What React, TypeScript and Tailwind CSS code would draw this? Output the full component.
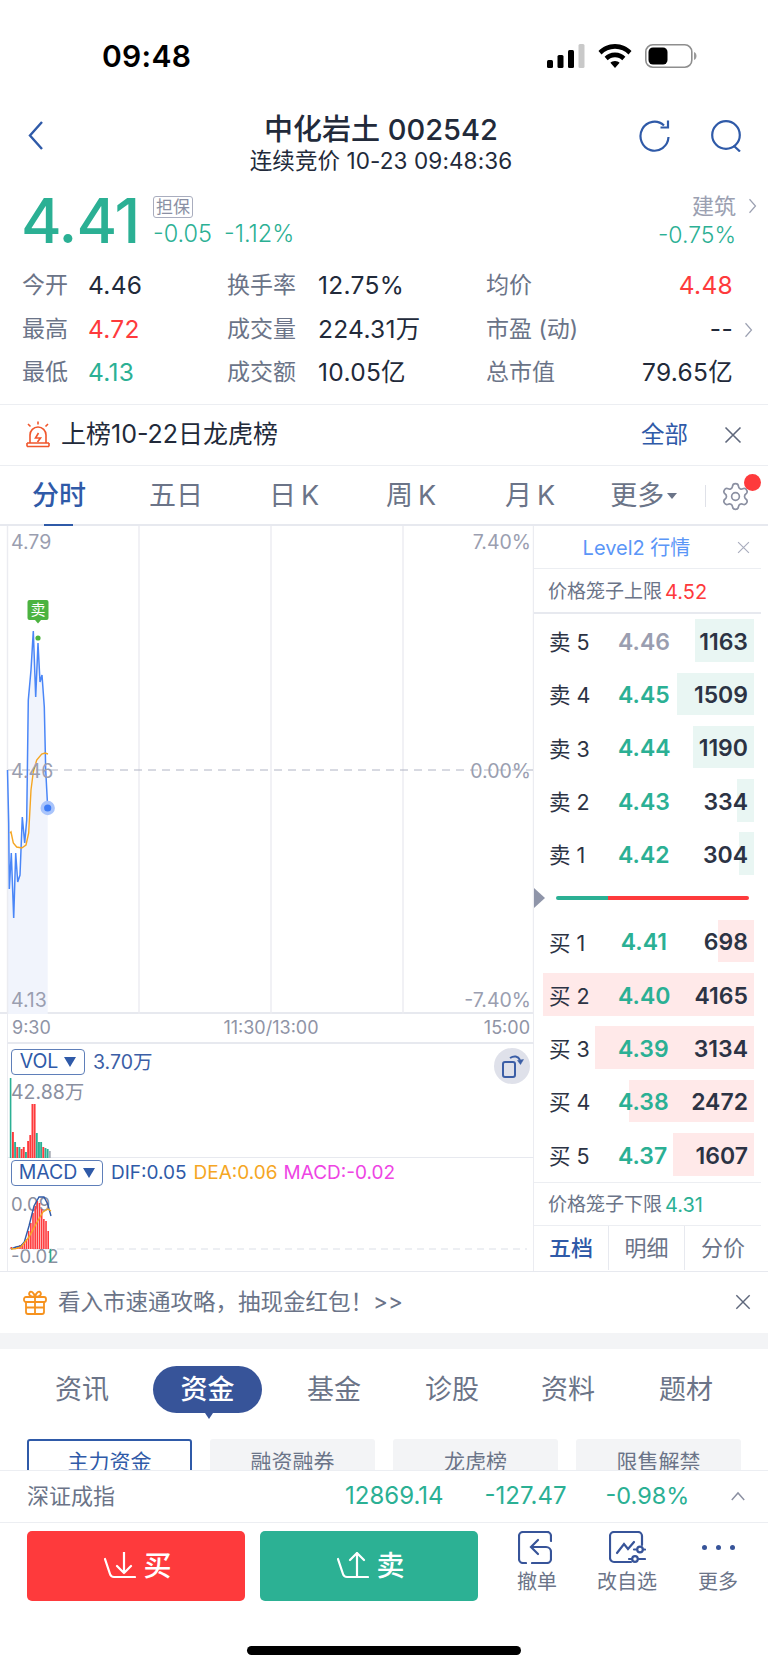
import React from "react";
import { Settings } from "lucide-react";

const GREEN = "text-[#2bb094]";
const RED = "text-[#fe3a3c]";

function Chevron({ dir = "right", className = "" }: { dir?: "left" | "right" | "up"; className?: string }) {
  const d = dir === "right" ? "M2 2 L10 11 L2 20" : dir === "left" ? "M10 2 L2 11 L10 20" : "M2 10 L9 2 L16 10";
  return (
    <svg viewBox={dir === "up" ? "0 0 18 12" : "0 0 12 22"} className={className} fill="none" stroke="currentColor" strokeWidth="1.6">
      <path d={d} />
    </svg>
  );
}

function Close({ className = "" }: { className?: string }) {
  return (
    <svg viewBox="0 0 18 18" className={className} fill="none" stroke="currentColor" strokeWidth="1.6">
      <path d="M1.5 1.5 L16.5 16.5 M16.5 1.5 L1.5 16.5" />
    </svg>
  );
}

function StatusBar() {
  return (
    <div className="h-[112px] flex items-center pl-[102px] pr-[71px] justify-between">
      <span className="text-[30px] font-semibold text-black leading-none tracking-[0.3px] font-['Inter']">09:48</span>
      <div className="flex items-center gap-[13px] -ml-[3px]">
        <svg width="38" height="24" viewBox="0 0 38 24">
          <rect x="0" y="16" width="6" height="8" rx="1.5" fill="#000" />
          <rect x="10.5" y="11" width="6" height="13" rx="1.5" fill="#000" />
          <rect x="21" y="6" width="6" height="18" rx="1.5" fill="#000" />
          <rect x="31.5" y="0" width="6" height="24" rx="1.5" fill="#c9c9c9" />
        </svg>
        <svg width="34" height="24" viewBox="0 0 34 24">
          <path d="M17 0 C24 0 29.5 3 33.5 7 L30.5 10.5 C27 7 22.5 4.8 17 4.8 C11.5 4.8 7 7 3.5 10.5 L0.5 7 C4.5 3 10 0 17 0 Z" fill="#000" />
          <path d="M17 8.5 C21.5 8.5 24.8 10.2 27.4 12.8 L24.3 16.2 C22.4 14.3 20 13.2 17 13.2 C14 13.2 11.6 14.3 9.7 16.2 L6.6 12.8 C9.2 10.2 12.5 8.5 17 8.5 Z" fill="#000" />
          <path d="M17 17 C19 17 20.4 17.7 21.6 18.8 L17 24 L12.4 18.8 C13.6 17.7 15 17 17 17 Z" fill="#000" />
        </svg>
        <svg width="52" height="24" viewBox="0 0 52 24">
          <rect x="0.8" y="0.8" width="46" height="22.4" rx="7" fill="none" stroke="#8e8e8e" strokeWidth="1.6" />
          <rect x="3.5" y="3.5" width="19" height="17" rx="4.5" fill="#000" />
          <path d="M49 8 C51 9 51.5 10.5 51.5 12 C51.5 13.5 51 15 49 16 Z" fill="#9a9a9a" />
        </svg>
      </div>
    </div>
  );
}

function Header() {
  return (
    <div className="h-[62px] grid grid-cols-[1fr_auto_1fr] pl-[27px] pr-[27px]">
      <div className="flex items-start pt-[7px]">
        <Chevron dir="left" className="w-[18px] h-[33px] text-[#2f5aa8]" />
      </div>
      <div className="flex flex-col items-center mr-[6px]">
        <div className="text-[29px] leading-[36px] text-[#222a3a] font-medium whitespace-nowrap">中化岩土 002542</div>
        <div className="text-[22.5px] leading-[26px] text-[#222a3a] whitespace-nowrap tracking-[0.1px]">连续竞价 10-23 09:48:36</div>
      </div>
      <div className="flex justify-end items-start gap-[41px] pt-[8px] -mr-[1px]">
        <svg width="31" height="32" viewBox="0 0 31 32" fill="none" stroke="#2f5aa8" strokeWidth="2.2">
          <path d="M29.5 17 A14 14.5 0 1 1 25 5.5" />
          <path d="M29 0.5 V7.5 H21.5" />
        </svg>
        <svg width="31" height="32" viewBox="0 0 31 32" fill="none" stroke="#2f5aa8" strokeWidth="2.2">
          <circle cx="15" cy="15" r="13.8" />
          <path d="M22.5 25.5 L29 31.5" />
        </svg>
      </div>
    </div>
  );
}

function Quote() {
  return (
    <div className="h-[88px] pl-[21px] pr-[32px] flex pt-[15px]">
      <div className={`text-[62px] leading-[64px] font-medium ${GREEN} w-[132px] tracking-[-1px]`}>4.41</div>
      <div className="flex flex-col">
        <div className="mt-[7px] w-[40px] h-[22px] border border-[#a9adbe] rounded-[3px] text-[17px] leading-[20px] text-center text-[#8a8fa3]">担保</div>
        <div className={`mt-[2px] text-[23.5px] leading-[28px] ${GREEN} flex gap-[12px] font-light`}>
          <span>-0.05</span>
          <span>-1.12%</span>
        </div>
      </div>
      <div className="ml-auto flex flex-col items-end">
        <div className="mt-[2px] flex items-center text-[22px] leading-[30px] text-[#9ba0b1] relative">
          建筑
          <Chevron className="absolute left-[56px] top-[6px] w-[9px] h-[18px] text-[#9ba0b1]" />
        </div>
        <div className={`text-[23px] leading-[28px] ${GREEN} font-light`}>-0.75%</div>
      </div>
    </div>
  );
}

function Stats() {
  const label = "text-[#6b7488] whitespace-nowrap";
  const num = "text-[24.5px] tracking-[0.3px] whitespace-nowrap";
  const rows: { a: string; av: string; ac: string; b: string; bv: string; c: string; cv: string; cc: string; more?: boolean }[] = [
    { a: "今开", av: "4.46", ac: "text-[#222a3a]", b: "换手率", bv: "12.75%", c: "均价", cv: "4.48", cc: RED },
    { a: "最高", av: "4.72", ac: RED, b: "成交量", bv: "224.31万", c: "市盈 (动)", cv: "--", cc: "text-[#222a3a]", more: true },
    { a: "最低", av: "4.13", ac: GREEN, b: "成交额", bv: "10.05亿", c: "总市值", cv: "79.65亿", cc: "text-[#222a3a]" },
  ];
  return (
    <div className="pl-[22px] pt-[2px] pb-[9px] text-[23px] leading-[43.5px]">
      {rows.map((r) => (
        <div key={r.a} className="flex items-center">
          <div className="w-[296px] shrink-0 grid grid-cols-[66px_139px_91px] items-center">
            <span className={label}>{r.a}</span>
            <span className={`${r.ac} ${num}`}>{r.av}</span>
            <span className={label}>{r.b}</span>
          </div>
          <span className={`text-[#222a3a] ${num} w-[168px]`}>{r.bv}</span>
          <div className="w-[247px] flex justify-between relative">
            <span className={label}>{r.c}</span>
            <span className={`${r.cc} ${num}`}>{r.cv}</span>
            {r.more && <Chevron className="absolute -right-[20px] top-[13px] w-[9px] h-[18px] text-[#9ba0b1]" />}
          </div>
        </div>
      ))}
    </div>
  );
}

function Notice() {
  return (
    <div className="h-[62px] border-y border-[#eceef2] flex items-center pl-[25px] pr-[26px]">
      <svg width="26" height="27" viewBox="0 0 26 27" fill="none" stroke="#f0562c" strokeWidth="1.6">
        <path d="M5 22 V14 A8 8 0 0 1 21 14 V22" />
        <path d="M2 25.5 H24 M2 22 V25.5 M24 22 V25.5 M2 22 H24" />
        <path d="M13.5 12 L10.5 17 H15.5 L12.5 21" />
        <path d="M13 0.5 V3.5 M3 3 L5.5 5.5 M23 3 L20.5 5.5" />
      </svg>
      <span className="ml-[10px] text-[25px] text-[#222a3a]">上榜10-22日龙虎榜</span>
      <span className="ml-auto text-[23.5px] text-[#2f5aa8]">全部</span>
      <Close className="ml-[36px] w-[18px] h-[18px] text-[#5f687c]" />
    </div>
  );
}

function Tabs() {
  const base = "text-[27px] text-[#6b7488] whitespace-nowrap";
  return (
    <div className="h-[60px] flex items-center relative border-b-2 border-[#e7e9ef] pt-[3px]">
      <div className="absolute left-[44px] -bottom-[2px] w-[29px] h-[2px] bg-[#2f5aa8]" />
      <span className="ml-[32px] text-[27px] font-medium text-[#2f5aa8]">分时</span>
      <span className={`ml-[63px] ${base}`}>五日</span>
      <span className={`ml-[66px] ${base}`}>日{"\u2009"}K</span>
      <span className={`ml-[67px] ${base}`}>周{"\u2009"}K</span>
      <span className={`ml-[69px] ${base}`}>月{"\u2009"}K</span>
      <span className={`ml-[55px] ${base}`}>更多</span>
      <span className="ml-[3px] w-0 h-0 border-x-[5px] border-x-transparent border-t-[6px] border-t-[#6b7488]" />
      <span className="ml-[28px] w-px h-[22px] bg-[#dfe1e8]" />
      <span className="ml-[14px] relative">
        <Settings className="w-[31px] h-[31px] text-[#8b90a2]" strokeWidth={1.3} />
        <span className="absolute left-[24px] -top-[7px] w-[17px] h-[17px] rounded-full bg-[#fe3a3c]" />
      </span>
    </div>
  );
}

const pricePts =
  "7.5,770 8.7,823 9.3,889 11.3,853 13.7,918 15.7,853 17.7,882 20,875 22.3,817 24.7,843 26.7,820 28.3,700 31,670 33.3,631 35.7,697 38,643 40,682 42,675 44.3,707 45.7,770 47.7,808";
const maPts =
  "10,833 11,832 13.3,843 16.7,847 21.7,848 26,845 28.7,833 31,790 33.3,772 36.7,760 41.7,754 45,753 48,754";

function MainChart() {
  const tl = "absolute text-[19.5px] leading-[22px] text-[#9a9eb0]";
  return (
    <div className="h-[488px] relative border-b-2 border-[#e7e9ef]">
      <svg className="absolute left-0 top-0" width="534" height="488" viewBox="0 526 534 488">
        <polygon points={`7.5,1014 ${pricePts} 47.7,1014`} fill="#f1f4fc" />
        <path d="M7.5 526 V1014 M139 526 V1014 M271 526 V1014 M403 526 V1014 M533.5 526 V1014" stroke="#ebecf1" strokeWidth="1.4" fill="none" />
        <path d="M8 770 H533" stroke="#b0b4c4" strokeWidth="1" strokeDasharray="8 6" fill="none" />
        <polyline points={pricePts} fill="none" stroke="#4a86f7" strokeWidth="1.5" />
        <polyline points={maPts} fill="none" stroke="#f5a623" strokeWidth="1.4" />
        <circle cx="38" cy="638" r="2.6" fill="#4cb340" />
        <circle cx="47.7" cy="808" r="7.2" fill="#a9c4fb" />
        <circle cx="47.7" cy="808" r="3.6" fill="#3f7df6" />
        <rect x="27.5" y="600" width="21" height="20" rx="2" fill="#4cb340" />
        <path d="M35 620 H41 L38 623.5 Z" fill="#4cb340" />
      </svg>
      <span className="absolute left-[27.5px] top-[74px] w-[21px] h-[20px] text-white text-[15px] leading-[20px] text-center">卖</span>
      <span className={`${tl} left-[11px] top-[5px]`}>4.79</span>
      <span className={`${tl} right-[3px] top-[5px]`}>7.40%</span>
      <span className={`${tl} left-[11px] top-[234px]`}>4.46</span>
      <span className={`${tl} right-[3px] top-[234px]`}>0.00%</span>
      <span className={`${tl} left-[11px] top-[463px]`}>4.13</span>
      <span className={`${tl} right-[3px] top-[463px]`}>-7.40%</span>
    </div>
  );
}

function XAxis() {
  return (
    <div className="h-[30px] ml-[7px] border-x border-[#ebecf1] border-b-2 border-b-[#e7e9ef] grid grid-cols-3 items-center pl-[4px] pr-[3px] text-[18px] text-[#8f94a6]">
      <span>9:30</span>
      <span className="text-center whitespace-nowrap">11:30/13:00</span>
      <span className="text-right">15:00</span>
    </div>
  );
}

function IndicatorTag({ name, w }: { name: string; w: string }) {
  return (
    <span className={`${w} h-[26px] border border-[#5f7fb9] rounded-[4px] flex items-center justify-center gap-[6px] text-[19.5px] text-[#2f5aa8] leading-none`}>
      {name}
      <span className="w-0 h-0 border-x-[6px] border-x-transparent border-t-[10px] border-t-[#2f5aa8]" />
    </span>
  );
}

const bars: [number, string][] = [
  [1078, "#2bb094"], [1132, "#fe3a3c"], [1142, "#2bb094"], [1147, "#fe3a3c"], [1147, "#2bb094"],
  [1149, "#fe3a3c"], [1147, "#fe3a3c"], [1152, "#2bb094"], [1141, "#fe3a3c"], [1135, "#fe3a3c"],
  [1104, "#fe3a3c"], [1104, "#fe3a3c"], [1133, "#2bb094"], [1142, "#2bb094"], [1142, "#2bb094"],
  [1147, "#fe3a3c"], [1148, "#2bb094"], [1149, "#2bb094"], [1151, "#a9adb8"],
];

function VolPanel() {
  return (
    <div className="h-[114px] ml-[7px] border-x border-[#ebecf1] border-b border-b-[#e7e9ef] relative pl-[3px] pt-[4px]">
      <div className="flex items-center gap-[8px]">
        <IndicatorTag name="VOL" w="w-[74px]" />
        <span className="text-[19.5px] text-[#3b5ea6]">3.70万</span>
      </div>
      <div className="text-[19.5px] leading-[24px] text-[#8a8f9f] mt-[3px]">42.88万</div>
      <svg className="absolute left-0 top-0" width="60" height="114" viewBox="7 1044 60 114">
        {bars.map(([top, c], i) => (
          <rect key={i} x={8.8 + i * 2.17} y={top} width={i === 0 ? 1.6 : 1.9} height={1158 - top} fill={c} />
        ))}
      </svg>
      <div className="absolute right-[3px] top-[4px] w-[36px] h-[36px] rounded-full bg-[#dfe1ea] flex items-center justify-center">
        <svg width="24" height="24" viewBox="0 0 24 24" fill="none" stroke="#3b5ea6" strokeWidth="2">
          <rect x="3" y="8" width="12" height="15" rx="2" />
          <path d="M10 4 C14 1.5 18 2 20 6" />
          <path d="M17.5 6.5 L23.5 5.5 L20.5 10.5 Z" fill="#3b5ea6" strokeWidth="0.5" />
        </svg>
      </div>
    </div>
  );
}

const macdTops = [1248, 1249, 1248, 1248, 1246, 1245, 1243, 1240, 1232, 1224, 1214, 1207, 1202, 1204, 1210, 1220, 1222, 1232];

function MacdPanel() {
  return (
    <div className="h-[113px] ml-[7px] border-x border-[#ebecf1] relative pl-[3px] pt-[2px]">
      <div className="flex items-center text-[19px] leading-none">
        <IndicatorTag name="MACD" w="w-[92px]" />
        <span className="ml-[8px] text-[#2f5aa8]">DIF:0.05</span>
        <span className="ml-[7px] text-[#f5a623]">DEA:0.06</span>
        <span className="ml-[6px] text-[#ee44e4]">MACD:-0.02</span>
      </div>
      <span className="absolute left-[3px] top-[34px] text-[18.5px] leading-[24px] text-[#8a8f9f]">0.09</span>
      <span className="absolute left-[3px] top-[86px] text-[18.5px] leading-[24px] text-[#8a8f9f]">-0.02</span>
      <svg className="absolute left-0 top-0" width="526" height="113" viewBox="7 1159 526 113">
        <path d="M8 1250 H526" stroke="#dcdfe8" strokeWidth="1.2" strokeDasharray="7 5" fill="none" />
        {macdTops.map((t, i) => (
          <rect key={i} x={9.5 + i * 2.17} y={t} width="1.6" height={1250 - t} fill="#fe3a3c" />
        ))}
        <rect x="48.7" y="1250" width="1.6" height="13" fill="#2bb094" />
        <polyline points="10,1250 15,1248 20,1247 23.3,1243 28,1227 33,1207 38,1198 43,1198 46.7,1205 50,1217" fill="none" stroke="#2f5aa8" strokeWidth="1.4" />
        <polyline points="10,1250 15,1249.5 20,1248 28,1238 35,1225 42,1213 47,1210 50,1212" fill="none" stroke="#f5a623" strokeWidth="1.4" />
      </svg>
    </div>
  );
}

function BookRow({ label, price, qty, bar, barColor, priceColor }: { label: string; price: string; qty: number; bar: number; barColor: string; priceColor: string }) {
  return (
    <div className="h-[42.6px] ml-[9px] w-[211px] relative flex items-center pl-[6px] pr-[6px] pt-[3px]">
      <div className={`absolute right-0 inset-y-0 ${barColor}`} style={{ width: bar }} />
      <span className="relative text-[21.5px] text-[#2c3344] w-[69px] whitespace-nowrap">{label}</span>
      <span className={`relative w-[49px] text-right text-[23px] font-semibold whitespace-nowrap ${priceColor}`}>{price}</span>
      <span className="relative ml-auto text-[23px] font-semibold text-[#2c3344]">{qty}</span>
    </div>
  );
}

function OrderBook() {
  const sells: [string, string, number, number, string][] = [
    ["卖 5", "4.46", 1163, 59, "text-[#9a9eb0]"],
    ["卖 4", "4.45", 1509, 77, GREEN],
    ["卖 3", "4.44", 1190, 61, GREEN],
    ["卖 2", "4.43", 334, 17, GREEN],
    ["卖 1", "4.42", 304, 15, GREEN],
  ];
  const buys: [string, string, number, number][] = [
    ["买 1", "4.41", 698, 36],
    ["买 2", "4.40", 4165, 211],
    ["买 3", "4.39", 3134, 159],
    ["买 4", "4.38", 2472, 125],
    ["买 5", "4.37", 1607, 81],
  ];
  return (
    <div className="w-[227px] flex flex-col">
      <div className="h-[44px] border-b border-[#eceef2] flex items-center relative justify-center pr-[22px] pt-[3px]">
        <span className="text-[20px] text-[#5b96f7]">Level2 行情</span>
        <Close className="absolute right-[11px] top-[15px] w-[13px] h-[13px] text-[#a9adbe]" />
      </div>
      <div className="h-[45px] border-b-2 border-[#e7e9ef] flex items-center pl-[14px] text-[19px] text-[#6b7488] whitespace-nowrap pt-[2px]">
        价格笼子上限<span className={`ml-[3px] ${RED} text-[20px]`}>4.52</span>
      </div>
      <div className="flex flex-col gap-[10.7px] pt-[5px]">
        {sells.map(([l, p, q, b, c]) => (
          <BookRow key={l} label={l} price={p} qty={q} bar={b} barColor="bg-[#e9f6f3]" priceColor={c} />
        ))}
      </div>
      <div className="h-[45px] relative flex items-center pl-[22px]">
        <span className="absolute left-0 top-[13px] w-0 h-0 border-y-[10px] border-y-transparent border-l-[11px] border-l-[#8f95a9]" />
        <div className="w-[193px] h-[4px] mt-[1px] rounded-full overflow-hidden flex">
          <div className="w-[52px] bg-[#2bb094]" />
          <div className="flex-1 bg-[#fe3a3c]" />
        </div>
      </div>
      <div className="flex flex-col gap-[10.7px]">
        {buys.map(([l, p, q, b]) => (
          <BookRow key={l} label={l} price={p} qty={q} bar={b} barColor="bg-[#ffe9e9]" priceColor={GREEN} />
        ))}
      </div>
      <div className="mt-[6px] h-[45px] border-y border-[#eceef2] flex items-center pl-[14px] text-[19px] text-[#6b7488] whitespace-nowrap pt-[2px]">
        价格笼子下限<span className={`ml-[3px] ${GREEN} text-[20px]`}>4.31</span>
      </div>
      <div className="h-[44px] grid grid-cols-[75px_76px_76px] text-[22px] text-[#6b7488] text-center leading-[44px]">
        <span className="border-r border-[#e7e9ef] text-[#2f5aa8] font-medium">五档</span>
        <span className="border-r border-[#e7e9ef]">明细</span>
        <span>分价</span>
      </div>
    </div>
  );
}

function ChartArea() {
  return (
    <div className="h-[746px] flex border-b border-[#e7e9ef]">
      <div className="w-[534px] flex flex-col">
        <MainChart />
        <XAxis />
        <VolPanel />
        <MacdPanel />
      </div>
      <OrderBook />
    </div>
  );
}

function Banner() {
  return (
    <div className="h-[61px] flex items-center pl-[23px] pr-[17px]">
      <svg width="24" height="25" viewBox="0 0 24 25" fill="none" stroke="#f6921e" strokeWidth="1.8">
        <rect x="1" y="7" width="22" height="5" rx="2" />
        <path d="M3 12 V22 A2 2 0 0 0 5 24 H19 A2 2 0 0 0 21 22 V12 M12 7 V24 M3 17.5 H21" />
        <path d="M12 7 C8 7 5 5 6.5 2.5 C8 0.5 11 2.5 12 7 C13 2.5 16 0.5 17.5 2.5 C19 5 16 7 12 7 Z" />
      </svg>
      <span className="ml-[11px] text-[22.5px] text-[#6b7488] whitespace-nowrap">看入市速通攻略，抽现金红包！&gt;&gt;</span>
      <Close className="ml-auto w-[16px] h-[16px] text-[#5f687c]" />
    </div>
  );
}

function Section() {
  const tab = "text-[27px] leading-[47px] text-[#6b7488] w-[54px] text-center whitespace-nowrap";
  const sub = "w-[165px] h-[46px] bg-[#f3f4f6] rounded-[3px] text-[21px] leading-[46px] text-center text-[#6b7488]";
  return (
    <div className="h-[121px] overflow-hidden">
      <div className="flex h-[72px] pt-[17px] pl-[55px] items-start">
        <span className={tab}>资讯</span>
        <span className="relative ml-[44px] w-[109px] h-[47px] rounded-[24px] bg-[#375499] text-white text-[27px] leading-[47px] text-center font-medium">
          资金
          <span className="absolute left-[50px] top-[44px] w-0 h-0 border-x-[6px] border-x-transparent border-t-[9px] border-t-[#375499]" />
        </span>
        <span className={`${tab} ml-[45px]`}>基金</span>
        <span className={`${tab} ml-[64px]`}>诊股</span>
        <span className={`${tab} ml-[62px]`}>资料</span>
        <span className={`${tab} ml-[64px]`}>题材</span>
      </div>
      <div className="flex gap-[18px] pl-[27px] pt-[18px]">
        <div className="w-[165px] h-[46px] border-2 border-[#2f5aa8] rounded-[3px] text-[21px] leading-[42px] text-center text-[#2f5aa8]">主力资金</div>
        <div className={sub}>融资融券</div>
        <div className={sub}>龙虎榜</div>
        <div className={sub}>限售解禁</div>
      </div>
    </div>
  );
}

function IndexBar() {
  return (
    <div className={`h-[53px] border-y border-[#eceef2] flex items-center pl-[27px] pr-[22px] text-[24px] ${GREEN}`}>
      <span className="text-[#6b7488] text-[22px]">深证成指</span>
      <span className="ml-[230px]">12869.14</span>
      <span className="ml-[41px]">-127.47</span>
      <span className="ml-[39px] text-[23.5px]">-0.98%</span>
      <Chevron dir="up" className="ml-auto w-[16px] h-[11px] text-[#8b90a2]" />
    </div>
  );
}

function Actions() {
  const lab = "text-[20px] leading-[24px] text-[#6b7488] whitespace-nowrap";
  return (
    <div className="flex pl-[27px] pt-[8px] h-[123px]">
      <div className="w-[218px] h-[70px] rounded-[5px] bg-[#fe3a3c] flex items-center justify-center gap-[7px] pl-[4px] text-white">
        <svg width="32" height="28" viewBox="0 0 32 28" fill="none" stroke="#fff" strokeWidth="2.2" strokeLinecap="round" strokeLinejoin="round">
          <path d="M1 7 L6 22 Q7 25 10 25 H31" />
          <path d="M20 0 V21 M13 14 L20 21 L27 14" />
        </svg>
        <span className="text-[28px] leading-none font-medium">买</span>
      </div>
      <div className="ml-[15px] w-[218px] h-[70px] rounded-[5px] bg-[#2cb194] flex items-center justify-center gap-[7px] pl-[4px] text-white">
        <svg width="32" height="28" viewBox="0 0 32 28" fill="none" stroke="#fff" strokeWidth="2.2" strokeLinecap="round" strokeLinejoin="round">
          <path d="M1 7 L6 22 Q7 25 10 25 H31" />
          <path d="M20 24 V1 M13 8 L20 1 L27 8" />
        </svg>
        <span className="text-[28px] leading-none font-medium">卖</span>
      </div>
      <div className="ml-[27px] w-[64px] flex flex-col items-center">
        <svg className="-ml-[5px]" width="34" height="33" viewBox="0 0 34 33" fill="none" stroke="#375499" strokeWidth="2.2" strokeLinecap="round">
          <path d="M30 1 H5 A4 4 0 0 0 1 5 V28 A4 4 0 0 0 5 32 H8" />
          <path d="M28 1 H29 A4 4 0 0 1 33 5 V10" />
          <path d="M14 32 H29 A4 4 0 0 0 33 28 V21 A5 5 0 0 0 28 16 H14" />
          <path d="M20 9 L13 16 L20 23" />
        </svg>
        <span className={`${lab} mt-[6px]`}>撤单</span>
      </div>
      <div className="ml-[26px] w-[64px] flex flex-col items-center">
        <svg className="ml-[1px]" width="37" height="33" viewBox="0 0 37 33" fill="none" stroke="#375499" strokeWidth="2.2" strokeLinecap="round">
          <path d="M22 31 H5 A4 4 0 0 1 1 27 V5 A4 4 0 0 1 5 1 H29 A4 4 0 0 1 33 5 V14" />
          <path d="M8 22 L15 13 L19 18 L25 11" />
          <circle cx="31" cy="18.5" r="2.8" />
          <circle cx="26" cy="28" r="2.8" />
          <path d="M25 18.5 H28 M34 18.5 H36 M20 28 H23 M29 28 H36" />
        </svg>
        <span className={`${lab} mt-[6px]`}>改自选</span>
      </div>
      <div className="ml-[27px] w-[64px] flex flex-col items-center">
        <div className="h-[33px] flex items-center gap-[9px] pt-[1px]">
          <span className="w-[5px] h-[5px] rounded-full bg-[#375499]" />
          <span className="w-[5px] h-[5px] rounded-full bg-[#375499]" />
          <span className="w-[5px] h-[5px] rounded-full bg-[#375499]" />
        </div>
        <span className={`${lab} mt-[6px]`}>更多</span>
      </div>
    </div>
  );
}

export default function App() {
  return (
    <div className="w-[768px] h-[1669px] overflow-hidden bg-white flex flex-col font-['Inter','Noto_Sans_CJK_SC',sans-serif]">
      <StatusBar />
      <Header />
      <Quote />
      <Stats />
      <Notice />
      <Tabs />
      <ChartArea />
      <Banner />
      <div className="h-[16px] bg-[#f3f4f6]" />
      <Section />
      <IndexBar />
      <Actions />
      <div className="mx-auto w-[274px] h-[9px] rounded-full bg-black" />
    </div>
  );
}
